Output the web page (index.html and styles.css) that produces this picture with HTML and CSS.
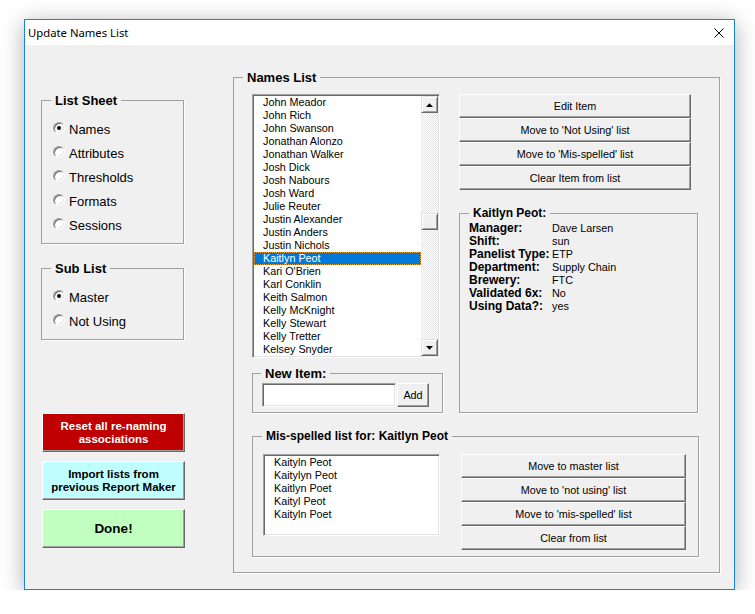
FILE: index.html
```html
<!DOCTYPE html>
<html>
<head>
<meta charset="utf-8">
<title>Update Names List</title>
<link rel="stylesheet" href="styles.css">
</head>
<body>
<div class="window">
  <div class="titlebar">
    <span class="title">Update Names List</span>
    <svg class="close" width="10" height="10" viewBox="0 0 10 10"><path d="M0.5 0.5L9.5 9.5M9.5 0.5L0.5 9.5" stroke="#000" stroke-width="1" fill="none"/></svg>
  </div>
  <div class="client">
    <div class="leftcol">
      <fieldset class="frame sheet">
        <legend>List Sheet</legend>
        <div class="radio"><span class="rb on"></span>Names</div>
        <div class="radio"><span class="rb"></span>Attributes</div>
        <div class="radio"><span class="rb"></span>Thresholds</div>
        <div class="radio"><span class="rb"></span>Formats</div>
        <div class="radio"><span class="rb"></span>Sessions</div>
      </fieldset>
      <fieldset class="frame sub">
        <legend>Sub List</legend>
        <div class="radio"><span class="rb on"></span>Master</div>
        <div class="radio"><span class="rb"></span>Not Using</div>
      </fieldset>
      <div class="bigbtn reset">Reset all re-naming<br>associations</div>
      <div class="bigbtn import">Import lists from<br>previous Report Maker</div>
      <div class="bigbtn done">Done!</div>
    </div>

    <fieldset class="frame names">
      <legend>Names List</legend>
      <div class="toprow">
        <div class="lcol">
          <div class="listbox main">
            <ul class="items">
              <li>John Meador</li>
              <li>John Rich</li>
              <li>John Swanson</li>
              <li>Jonathan Alonzo</li>
              <li>Jonathan Walker</li>
              <li>Josh Dick</li>
              <li>Josh Nabours</li>
              <li>Josh Ward</li>
              <li>Julie Reuter</li>
              <li>Justin Alexander</li>
              <li>Justin Anders</li>
              <li>Justin Nichols</li>
              <li class="sel">Kaitlyn Peot</li>
              <li>Kari O'Brien</li>
              <li>Karl Conklin</li>
              <li>Keith Salmon</li>
              <li>Kelly McKnight</li>
              <li>Kelly Stewart</li>
              <li>Kelly Tretter</li>
              <li>Kelsey Snyder</li>
            </ul>
            <div class="scrollbar">
              <div class="sbtn"><svg width="7" height="4" viewBox="0 0 7 4"><polygon points="0,4 7,4 3.5,0.2" fill="#000"/></svg></div>
              <div class="track"><div class="thumb"></div></div>
              <div class="sbtn"><svg width="7" height="4" viewBox="0 0 7 4"><polygon points="0,0 7,0 3.5,3.8" fill="#000"/></svg></div>
            </div>
          </div>
          <fieldset class="frame newitem">
            <legend>New Item:</legend>
            <div class="addrow">
              <div class="textbox"></div>
              <div class="btn add">Add</div>
            </div>
          </fieldset>
        </div>
        <div class="rcol">
          <div class="btnstack wide">
            <div class="btn">Edit Item</div>
            <div class="btn">Move to 'Not Using' list</div>
            <div class="btn">Move to 'Mis-spelled' list</div>
            <div class="btn">Clear Item from list</div>
          </div>
          <fieldset class="frame info">
            <legend>Kaitlyn Peot:</legend>
            <div class="details">
              <span class="k">Manager:</span><span class="v">Dave Larsen</span>
              <span class="k">Shift:</span><span class="v">sun</span>
              <span class="k">Panelist Type:</span><span class="v">ETP</span>
              <span class="k">Department:</span><span class="v">Supply Chain</span>
              <span class="k">Brewery:</span><span class="v">FTC</span>
              <span class="k">Validated 6x:</span><span class="v">No</span>
              <span class="k">Using Data?:</span><span class="v">yes</span>
            </div>
          </fieldset>
        </div>
      </div>
      <fieldset class="frame mis">
        <legend>Mis-spelled list for: Kaitlyn Peot</legend>
        <div class="misrow">
          <div class="listbox small">
            <ul class="items">
              <li>Kaityln Peot</li>
              <li>Kaitylyn Peot</li>
              <li>Kaitlyn Poet</li>
              <li>Kaityl Peot</li>
              <li>Kaityln Poet</li>
            </ul>
          </div>
          <div class="btnstack narrow">
            <div class="btn">Move to master list</div>
            <div class="btn">Move to 'not using' list</div>
            <div class="btn">Move to 'mis-spelled' list</div>
            <div class="btn">Clear from list</div>
          </div>
        </div>
      </fieldset>
    </fieldset>
  </div>
</div>
</body>
</html>
```

FILE: styles.css
```css
html, body {
  margin: 0;
  padding: 0;
  background: #ffffff;
}
body {
  font-family: "Liberation Sans", Arial, sans-serif;
  color: #000;
}
.window {
  box-sizing: border-box;
  width: 711px;
  height: 571px;
  margin: 19px 0 0 24px;
  border: 1px solid #1883d7;
  background: #f0f0f0;
  box-shadow: 0 4px 22px rgba(0, 0, 0, 0.32);
  display: flex;
  flex-direction: column;
}
.titlebar {
  height: 25px;
  flex: 0 0 25px;
  background: #ffffff;
  display: flex;
  align-items: center;
  justify-content: space-between;
  padding: 0 10px 0 3px;
}
.title {
  font-family: "Noto Sans", "Open Sans", sans-serif;
  font-size: 11.3px;
  line-height: 16px;
  color: #000;
}
.close {
  display: block;
}
.client {
  flex: 1;
  display: flex;
  align-items: flex-start;
  gap: 49px;
  padding-left: 16px;
}

/* frames */
.frame {
  margin: 0;
  padding: 0;
  border: 1px solid #a0a0a0;
  min-inline-size: 0;
  box-shadow: 1px 1px 0 #ffffff;
}
.frame > legend {
  padding: 0 4px;
  font-weight: bold;
  font-size: 13px;
  line-height: 15px;
  height: 15px;
}

/* left column */
.leftcol {
  width: 143px;
  margin-top: 48px;
  display: flex;
  flex-direction: column;
}
.sheet, .sub {
  padding: 9px 0 6px 11px;
}
.sheet > legend, .sub > legend {
  margin-left: -2px;
}
.sub {
  margin-top: 17px;
}
.radio {
  height: 24px;
  display: flex;
  align-items: center;
  font-size: 13px;
}
.rb {
  box-sizing: border-box;
  width: 12px;
  height: 12px;
  margin-right: 4px;
  border-radius: 50%;
  border: 1px solid;
  border-color: #a0a0a0 #ffffff #ffffff #a0a0a0;
  background: #ffffff;
  box-shadow: inset 1px 1px 0 #696969, inset -1px -1px 0 #e3e3e3;
  display: flex;
  align-items: center;
  justify-content: center;
  margin-top: -2px;
}
.rb.on::after {
  content: "";
  width: 4px;
  height: 4px;
  border-radius: 50%;
  background: #000;
}
.bigbtn {
  box-sizing: border-box;
  width: 143px;
  height: 39px;
  margin-left: 1px;
  margin-top: 9px;
  display: flex;
  align-items: center;
  justify-content: center;
  text-align: center;
  font-weight: bold;
  font-size: 11.5px;
  line-height: 13px;
  border: 1px solid;
  border-color: #ffffff #696969 #696969 #ffffff;
  box-shadow: inset -1px -1px 0 #a0a0a0;
}
.reset {
  margin-top: 73px;
  background: #c00000;
  color: #ffffff;
}
.import {
  background: #c0ffff;
}
.done {
  background: #c0ffc0;
  font-size: 13.5px;
}

/* names list frame */
.names {
  width: 487px;
  margin-top: 25px;
  padding: 9px 0 15px 18px;
  box-sizing: border-box;
}
.names > legend {
  margin-left: -9px;
}
.toprow {
  display: flex;
  gap: 16px;
}
.lcol {
  width: 191px;
  display: flex;
  flex-direction: column;
}
.rcol {
  width: 239px;
  display: flex;
  flex-direction: column;
}

.listbox {
  box-sizing: border-box;
  background: #ffffff;
  border: 1px solid;
  border-color: #a0a0a0 #ffffff #ffffff #a0a0a0;
  box-shadow: inset 1px 1px 0 #696969, inset -1px -1px 0 #e3e3e3;
  padding: 1px;
  display: flex;
}
.listbox.main {
  width: 188px;
  height: 264px;
}
.listbox.small {
  width: 177px;
  height: 82px;
}
.items {
  list-style: none;
  margin: 0;
  padding: 0;
  flex: 1;
  font-size: 10.8px;
}
.items li {
  height: 13px;
  line-height: 13px;
  padding-left: 9px;
  white-space: nowrap;
}
.items li.sel {
  background: #0078d7;
  color: #ffffff;
  outline: 1px dotted #e8a040;
  outline-offset: -1px;
}
.scrollbar {
  width: 17px;
  display: flex;
  flex-direction: column;
}
.sbtn {
  box-sizing: border-box;
  height: 17px;
  flex: 0 0 17px;
  background: #f0f0f0;
  border: 1px solid;
  border-color: #e3e3e3 #696969 #696969 #e3e3e3;
  box-shadow: inset 1px 1px 0 #ffffff, inset -1px -1px 0 #a0a0a0;
  display: flex;
  align-items: center;
  justify-content: center;
}
.sbtn svg {
  display: block;
}
.track {
  flex: 1;
  background: repeating-conic-gradient(#ffffff 0 25%, #e6e6e6 0 50%) 0 0 / 2px 2px;
}
.thumb {
  box-sizing: border-box;
  height: 17px;
  margin-top: 100px;
  background: #f0f0f0;
  border: 1px solid;
  border-color: #e3e3e3 #696969 #696969 #e3e3e3;
  box-shadow: inset 1px 1px 0 #ffffff, inset -1px -1px 0 #a0a0a0;
}

.newitem {
  margin-top: 8px;
  padding: 2px 0 5px 9px;
}
.newitem > legend {
  margin-left: -1px;
}
.addrow {
  display: flex;
  gap: 1px;
}
.textbox {
  box-sizing: border-box;
  width: 134px;
  height: 24px;
  background: #ffffff;
  border: 1px solid;
  border-color: #a0a0a0 #ffffff #ffffff #a0a0a0;
  box-shadow: inset 1px 1px 0 #696969, inset -1px -1px 0 #e3e3e3;
}

.btn {
  box-sizing: border-box;
  height: 24px;
  background: #f0f0f0;
  border: 1px solid;
  border-color: #ffffff #696969 #696969 #ffffff;
  box-shadow: inset -1px -1px 0 #a0a0a0;
  display: flex;
  align-items: center;
  justify-content: center;
  font-size: 10.8px;
  white-space: nowrap;
}
.btn.add {
  width: 32px;
}
.btnstack {
  display: flex;
  flex-direction: column;
}
.btnstack.wide .btn {
  width: 232px;
}
.btnstack.narrow .btn {
  width: 225px;
}

.info {
  flex: 1;
  margin-top: 16px;
  padding: 1px 0 0 9px;
}
.info > legend {
  margin-left: 0;
}
.info > legend,
.mis > legend {
  font-size: 12px;
}
.details {
  display: grid;
  grid-template-columns: 83px auto;
  line-height: 13px;
}
.details .k {
  font-weight: bold;
  font-size: 12px;
  white-space: nowrap;
}
.details .v {
  font-size: 10.8px;
}

.mis {
  width: 447px;
  margin-top: 16px;
  padding: 10px 0 6px 10px;
  box-sizing: border-box;
}
.mis > legend {
  margin-left: -1px;
}
.misrow {
  display: flex;
  align-items: flex-start;
  gap: 21px;
}
```
